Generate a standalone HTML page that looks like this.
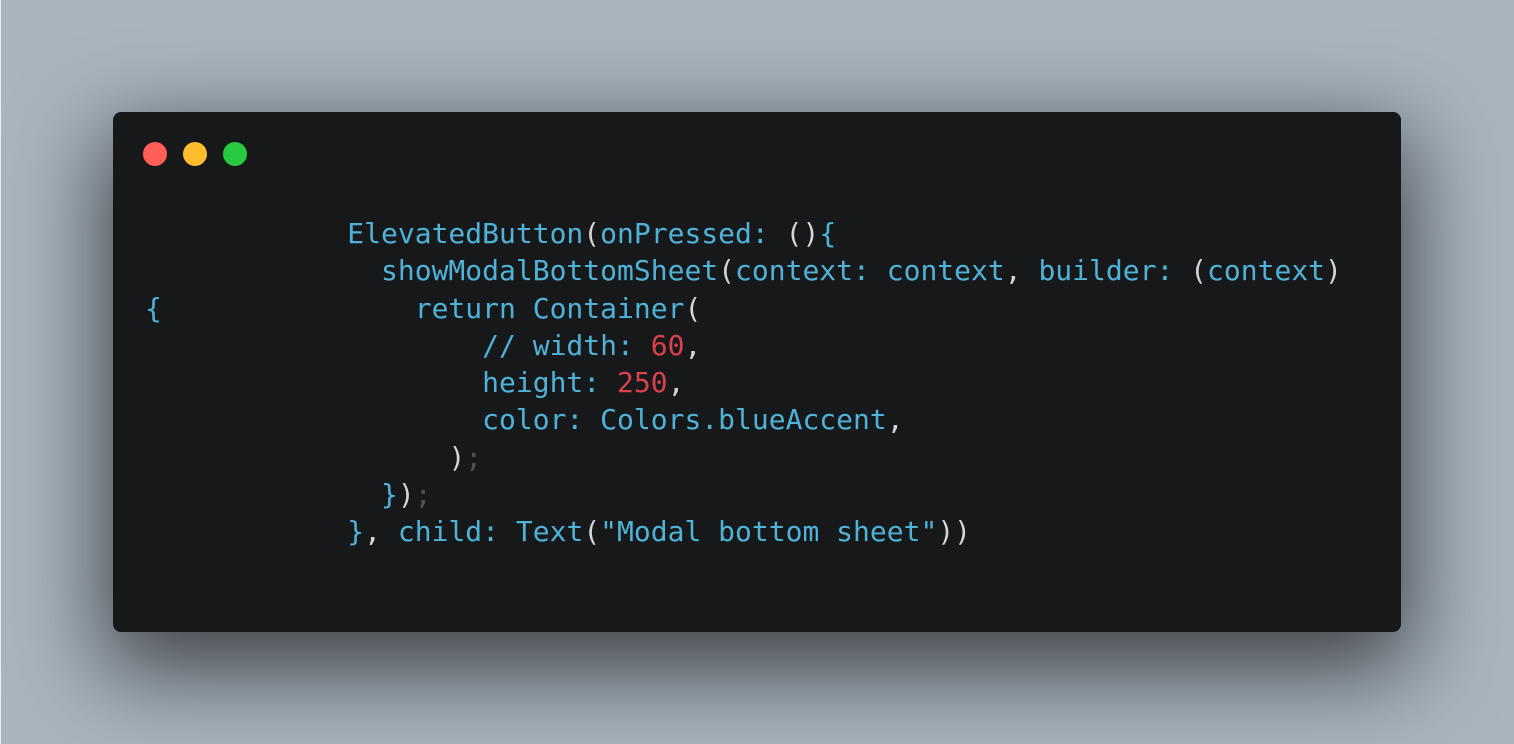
<!DOCTYPE html>
<html><head><style>
html,body{margin:0;padding:0;}
body{width:1514px;height:744px;background:#a9b4bf;position:relative;overflow:hidden;}
.edge{position:absolute;left:0;top:0;width:1px;height:744px;background:#e8ecef;}
.win{position:absolute;left:113px;top:112px;width:1288px;height:520px;background:#17181a;border-radius:8px;box-shadow:0 30px 90px 10px rgba(0,0,0,0.62);}
.dot{position:absolute;top:30px;width:24px;height:24px;border-radius:50%;}
pre{position:absolute;left:32px;top:103px;margin:0;font-family:"DejaVu Sans Mono","Liberation Mono",monospace;font-size:28px;line-height:37.3px;color:#4fb3d9;}
.w{color:#d4d4d4}.r{color:#d9414c}.g{color:#4b5359}
</style></head><body>
<div class="edge"></div>
<div class="win">
<div class="dot" style="left:30px;background:#ff5f56"></div>
<div class="dot" style="left:70px;background:#ffbd2e"></div>
<div class="dot" style="left:110px;background:#27c93f"></div>
<pre>            ElevatedButton<span class="w">(</span>onPressed: <span class="w">()</span>{
              showModalBottomSheet<span class="w">(</span>context: context<span class="w">,</span> builder: <span class="w">(</span>context<span class="w">)</span>
{               return Container<span class="w">(</span>
                    // width: <span class="r">60</span><span class="w">,</span>
                    height: <span class="r">250</span><span class="w">,</span>
                    color: Colors.blueAccent<span class="w">,</span>
                  <span class="w">)</span><span class="g">;</span>
              }<span class="w">)</span><span class="g">;</span>
            }<span class="w">,</span> child: Text<span class="w">(</span>"Modal bottom sheet"<span class="w">))</span></pre>
</div>
</body></html>
